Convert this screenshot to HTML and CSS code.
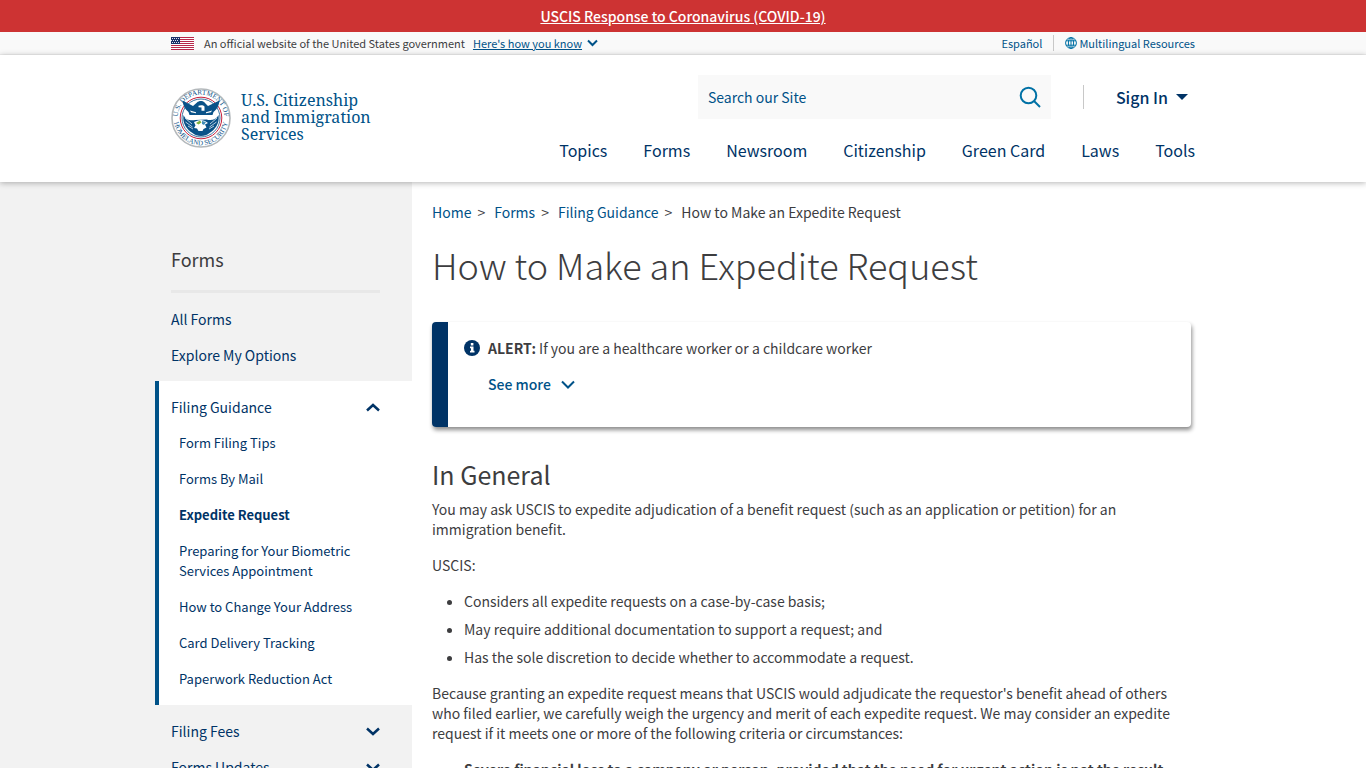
FILE: index.html
```html
<!DOCTYPE html>
<html lang="en">
<head>
    <meta charset="utf-8">
    <meta name="viewport" content="width=device-width, initial-scale=1">
    <title>How to Make an Expedite Request | USCIS</title>
    <link rel="stylesheet" href="styles.css">
</head>
<body>
    <div class="covid-banner">
        <a href="#">USCIS Response to Coronavirus (COVID-19)</a>
    </div>

    <div class="gov-banner">
        <div class="container gov-inner">
            <svg class="flag" viewBox="0 0 23 13" aria-hidden="true">
                <rect width="23" height="13" fill="#fff"/>
                <path d="M0 .5h23M0 2.5h23M0 4.5h23M0 6.5h23M0 8.5h23M0 10.5h23M0 12.5h23" stroke="#b8284a"/>
                <rect width="9" height="7" fill="#1c3168"/>
                <path d="M1 1.5h8M0 3.5h8M1 5.5h8" stroke="#dfe4f0" stroke-dasharray="1 1"/>
            </svg>
            <span>An official website of the United States government</span>
            <button type="button" class="how-know">
                <span>Here's how you know</span>
                <svg class="chevron-sm" viewBox="0 0 11 8" aria-hidden="true"><path d="m1 1.5 4.500 4.500L10 1.500"/></svg>
            </button>
            <div class="lang-links">
                <a href="#" class="espanol">Español</a>
                <a href="#" class="multilingual">
                    <svg viewBox="0 0 12 12" aria-hidden="true"><circle cx="6" cy="6" r="5.4"/><ellipse cx="6" cy="6" rx="2.6" ry="5.4"/><path d="M6 .6v10.8M1 3.8h10M1 8.2h10"/></svg>
                    Multilingual Resources
                </a>
            </div>
        </div>
    </div>

    <header class="site-header">
        <div class="container header-inner">
            <a href="#" class="logo">
                <svg class="seal" viewBox="0 0 60 60" aria-hidden="true">
                    <defs>
                        <path id="seal-top" d="M8.2 38.5A23.400 23.400 0 1 1 51.800 38.500"/>
                        <path id="seal-bottom" d="M2.800 30A27.200 27.200 0 0 0 57.200 30"/>
                    </defs>
                    <circle cx="30" cy="30" r="29" fill="#fff" stroke="#b3b8bb" stroke-width="1.6"/>
                    <circle cx="30" cy="30" r="20.8" fill="#fff" stroke="#c8203c"/>
                    <circle cx="30" cy="30" r="19" fill="#fff" stroke="#0a5288" stroke-width=".8"/>
                    <text class="seal-text"><textPath href="#seal-top" startOffset="50%" text-anchor="middle">U.S. DEPARTMENT OF</textPath></text>
                    <text class="seal-text"><textPath href="#seal-bottom" startOffset="50%" text-anchor="middle">HOMELAND SECURITY</textPath></text>
                    <path fill="#0a5288" d="M11.500 12.500 22 18l4-3.500c2-2 6-2.200 8 .5l3 3 11.500-5.500c-.5 5-2.500 9-6 11.500l-1 3H18.500l-1-3c-3.500-2.500-5.500-6.500-6-11.500z"/>
                    <path fill="#fff" d="M27.500 17.800c2-1 5-.8 6 .8v4.200h-3v-3.200l-3-.4zM19 22.500l6 1.800v1l-5-1zM41 22.500l-6 1.800v1l5-1z"/>
                    <path fill="#0a5288" d="M12.500 27c2 5 7 6 12 5l11-.5c5 1.500 10 0 12-4.500 1.500 9-4 15-9 18-4 4-13 4-17 0-5-3-10.500-9-9-18z"/>
                    <path fill="none" stroke="#fff" stroke-width=".7" d="m14 30 7 6M14.500 34l7 5M17 38l5 3M46 30l-7 6M45.500 34l-7 5M43 38l-5 3"/>
                    <path fill="#fff" d="m23 34 4-1.500 3-.5 4 1 3 2-3 1.500 1.500 3-3 1.500-1 2h-4l-1.500-2.500-3-.5 1.500-2.500z"/>
                    <path fill="#7db13c" d="m25 35 4-2.500 1.500 2-3 2z"/>
                    <path fill="#3f8db8" d="m31 33 4 1-2 3-2-1z"/>
                </svg>
                <span class="logo-text">U.S. Citizenship<br>and Immigration<br>Services</span>
            </a>
            <div class="header-right">
                <div class="header-tools">
                    <form class="search" role="search">
                        <input type="search" aria-label="Search our Site" placeholder="Search our Site">
                        <button type="submit" aria-label="Search">
                            <svg viewBox="0 0 22 22"><circle cx="9.500" cy="9.500" r="7.800"/><path d="m15 15 6 6"/></svg>
                        </button>
                    </form>
                    <button type="button" class="sign-in">Sign In <span class="caret"></span></button>
                </div>
                <nav class="main-nav" aria-label="Main">
                    <a href="#">Topics</a>
                    <a href="#">Forms</a>
                    <a href="#">Newsroom</a>
                    <a href="#">Citizenship</a>
                    <a href="#">Green Card</a>
                    <a href="#">Laws</a>
                    <a href="#">Tools</a>
                </nav>
            </div>
        </div>
    </header>

    <div class="page">
        <aside class="sidebar">
            <nav class="side-nav" aria-label="Forms">
                <h2>Forms</h2>
                <ul class="side-list">
                    <li><a href="#">All Forms</a></li>
                    <li><a href="#">Explore My Options</a></li>
                    <li class="open">
                        <div class="side-row">
                            <a href="#">Filing Guidance</a>
                            <button type="button" aria-label="Collapse Filing Guidance"><svg viewBox="0 0 14 9"><path d="M1 7.500 7 2l6 5.500"/></svg></button>
                        </div>
                        <ul class="side-sub">
                            <li><a href="#">Form Filing Tips</a></li>
                            <li><a href="#">Forms By Mail</a></li>
                            <li><a href="#" class="current">Expedite Request</a></li>
                            <li><a href="#">Preparing for Your Biometric Services Appointment</a></li>
                            <li><a href="#">How to Change Your Address</a></li>
                            <li><a href="#">Card Delivery Tracking</a></li>
                            <li><a href="#">Paperwork Reduction Act</a></li>
                        </ul>
                    </li>
                    <li class="side-row">
                        <a href="#">Filing Fees</a>
                        <button type="button" aria-label="Expand Filing Fees"><svg viewBox="0 0 14 9"><path d="m1 1.500 6 5.500 6-5.500"/></svg></button>
                    </li>
                    <li class="side-row">
                        <a href="#">Forms Updates</a>
                        <button type="button" aria-label="Expand Forms Updates"><svg viewBox="0 0 14 9"><path d="m1 1.500 6 5.500 6-5.500"/></svg></button>
                    </li>
                </ul>
            </nav>
        </aside>

        <main class="content">
            <nav class="breadcrumb" aria-label="Breadcrumb">
                <a href="#">Home</a><span class="sep">&gt;</span>
                <a href="#">Forms</a><span class="sep">&gt;</span>
                <a href="#">Filing Guidance</a><span class="sep">&gt;</span>
                <span>How to Make an Expedite Request</span>
            </nav>

            <h1>How to Make an Expedite Request</h1>

            <div class="alert">
                <svg class="info" viewBox="0 0 16 16" aria-hidden="true">
                    <circle cx="8" cy="8" r="8" fill="#003366"/>
                    <path fill="#fff" d="M6.800 3h2.600v2.400H6.800zM6 6.500h3.500v4.300h1v1.700H6v-1.700h1V8.200H6z"/>
                </svg>
                <div>
                    <p><strong>ALERT:</strong> If you are a healthcare worker or a childcare worker</p>
                    <button type="button" class="see-more">
                        See more
                        <svg viewBox="0 0 14 9" aria-hidden="true"><path d="m1 1.500 6 6 6-6"/></svg>
                    </button>
                </div>
            </div>

            <h2>In General</h2>
            <p>You may ask USCIS to expedite adjudication of a benefit request (such as an application or petition) for an immigration benefit.</p>
            <p>USCIS:</p>
            <ul>
                <li>Considers all expedite requests on a case-by-case basis;</li>
                <li>May require additional documentation to support a request; and</li>
                <li>Has the sole discretion to decide whether to accommodate a request.</li>
            </ul>
            <p>Because granting an expedite request means that USCIS would adjudicate the requestor's benefit ahead of others who filed earlier, we carefully weigh the urgency and merit of each expedite request. We may consider an expedite request if it meets one or more of the following criteria or circumstances:</p>
            <ul>
                <li><strong>Severe financial loss to a company or person, provided that the need for urgent action is not the result</strong></li>
            </ul>
        </main>
    </div>
</body>
</html>
```
FILE: styles.css
```css
* {
    box-sizing: border-box;
}

body {
    margin: 0;
    font-family: "Source Sans Pro", "Noto Sans CJK SC", sans-serif;
    font-size: 14px;
    line-height: 20px;
    color: #3d3d3f;
    background: #fff;
}

a {
    color: #005288;
    text-decoration: none;
}

button {
    padding: 0;
    border: 0;
    background: none;
    font: inherit;
    cursor: pointer;
}

svg {
    display: block;
    flex-shrink: 0;
}

ul {
    margin: 0;
    padding: 0;
}

.container {
    max-width: 1024px;
    margin: 0 auto;
}

/* top banners */
.covid-banner {
    padding: 6px 0;
    background: #cd3333;
    text-align: center;
    font-weight: 500;
}

.covid-banner a {
    color: #fff;
    text-decoration: underline;
}

.gov-banner {
    background: #f9f9f9;
    border-bottom: 1px solid #f0f0f0;
    font-size: 11px;
}

.gov-inner {
    display: flex;
    align-items: center;
    height: 22px;
}

.flag {
    width: 23px;
    height: 13px;
    margin-right: 10px;
}

.how-know {
    display: flex;
    align-items: center;
    gap: 5px;
    margin-left: 8px;
    color: #005288;
}

.how-know span {
    text-decoration: underline;
}

.chevron-sm {
    width: 11px;
    height: 8px;
    fill: none;
    stroke: #005288;
    stroke-width: 2;
}

.lang-links {
    display: flex;
    align-items: center;
    margin-left: auto;
}

.espanol {
    padding-right: 11px;
}

.multilingual {
    display: flex;
    align-items: center;
    gap: 2px;
    height: 16px;
    padding-left: 11px;
    border-left: 1px solid #c8c8c8;
}

.multilingual svg {
    width: 12px;
    height: 12px;
    fill: none;
    stroke: #0071a5;
    stroke-width: 1;
}

/* header */
.site-header {
    position: relative;
    padding: 20px 0 22px;
    background: #fff;
    box-shadow: 0 1px 6px rgba(0, 0, 0, 0.3);
}

.header-inner {
    display: flex;
    justify-content: space-between;
}

.logo {
    display: flex;
    align-items: center;
    gap: 10px;
}

.seal {
    width: 60px;
    height: 60px;
}

.seal-text {
    font-family: "Liberation Serif", serif;
    font-size: 7px;
    fill: #0a5288;
}

.logo-text {
    font-family: "Noto Serif", "Liberation Serif", serif;
    font-size: 16px;
    line-height: 17px;
}

.header-right {
    display: flex;
    flex-direction: column;
    align-items: flex-end;
    gap: 21px;
}

.header-tools {
    display: flex;
    align-items: center;
}

.search {
    display: flex;
    align-items: center;
    width: 353px;
    height: 44px;
    padding: 0 10px;
    background: #f9f9f9;
}

.search input {
    flex: 1;
    min-width: 0;
    padding: 0;
    border: 0;
    outline: 0;
    background: none;
    font: inherit;
}

.search input::placeholder {
    color: #005288;
    opacity: 1;
}

.search svg {
    width: 22px;
    height: 22px;
    fill: none;
    stroke: #0071a5;
    stroke-width: 2;
}

.sign-in {
    display: flex;
    align-items: center;
    gap: 8px;
    height: 24px;
    margin-left: 32px;
    padding: 0 7px 0 32px;
    border-left: 1px solid #c8c8c8;
    color: #003366;
    font-size: 16px;
    font-weight: 500;
}

.caret {
    border: 6px solid transparent;
    border-top-color: #003366;
    border-bottom: 0;
}

.main-nav {
    display: flex;
    gap: 36px;
    font-size: 16px;
}

.main-nav a {
    color: #003366;
}

/* two column layout, the sidebar background bleeds to the left edge */
.page {
    display: grid;
    grid-template-columns: calc(50% - 271px) minmax(0, 1fr);
}

.sidebar {
    display: flex;
    justify-content: flex-end;
    background: #f2f2f2;
}

.side-nav {
    width: 257px;
    padding-top: 63px;
}

.side-nav a {
    color: #003366;
}

.side-nav h2 {
    margin: 0 32px 8px 16px;
    padding-bottom: 17px;
    border-bottom: 3px solid #e8e8e8;
    font-size: 18px;
    font-weight: 400;
    line-height: 28px;
}

.side-list {
    list-style: none;
}

.side-list > li {
    padding: 8px 32px 8px 16px;
}

.side-list > .open {
    margin: 8px 0;
    padding-left: 12px;
    border-left: 4px solid #005288;
    background: #fff;
}

.side-row {
    display: flex;
    align-items: center;
    justify-content: space-between;
}

.open .side-row {
    padding: 8px 0;
}

.side-row svg {
    width: 14px;
    height: 9px;
    fill: none;
    stroke: #003366;
    stroke-width: 2.5;
}

.side-sub {
    padding-left: 8px;
    list-style: none;
    font-size: 13px;
}

.side-sub li {
    padding: 8px 0;
}

.side-sub .current {
    font-weight: 700;
}

/* main column */
.content {
    max-width: 783px;
    padding: 20px 4px 0 20px;
}

.breadcrumb {
    display: flex;
}

.sep {
    margin: 0 9px 0 6px;
}

h1 {
    margin: 15px 0 31px;
    font-size: 36px;
    font-weight: 300;
    line-height: 54px;
}

.alert {
    display: flex;
    gap: 8px;
    min-height: 105px;
    margin-bottom: 29px;
    padding: 16px;
    border-left: 16px solid #003366;
    border-radius: 4px;
    box-shadow: 1px 3px 4px rgba(0, 0, 0, 0.45);
}

.alert p {
    margin: 0;
}

.info {
    width: 16px;
    height: 16px;
    margin-top: 2px;
}

.see-more {
    display: flex;
    align-items: center;
    gap: 10px;
    margin-top: 16px;
    color: #005288;
    font-weight: 500;
}

.see-more svg {
    width: 14px;
    height: 9px;
    fill: none;
    stroke: #005288;
    stroke-width: 2;
}

.content h2 {
    margin: 0 0 7px;
    font-size: 25px;
    font-weight: 400;
    line-height: 36px;
}

.content > p {
    margin: 0 0 16px;
}

.content > ul {
    margin-bottom: 16px;
    padding-left: 32px;
}

.content > ul li + li {
    margin-top: 8px;
}
```
